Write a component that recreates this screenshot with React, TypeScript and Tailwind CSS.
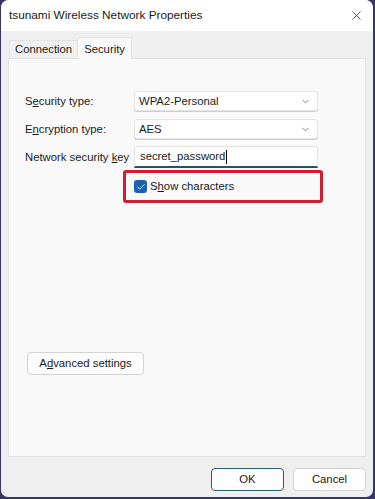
import { Check, ChevronDown, X } from "lucide-react";

const font = { fontFamily: '"Liberation Sans", Arial, sans-serif' };

function Combo({ value }: { value: string }) {
  return (
    <div className="flex h-[20px] w-[184px] items-center justify-between rounded-[3px] border border-[#e3e3e3] bg-white pl-[4px] pr-[6px] shadow-[0_1px_0_#cfcfcf]">
      <span>{value}</span>
      <ChevronDown size={11} strokeWidth={1.5} className="text-[#555]" />
    </div>
  );
}

export default function App() {
  return (
    <div className="h-[499px] w-[375px] overflow-hidden bg-[#3a3468] pb-[2px] pl-[1px] pr-[2px]" style={font}>
      <div className="flex h-full flex-col rounded-b-[7px] rounded-t-[8px] bg-[#efefef] text-[11.3px] text-[#1a1a1a]">
        <div className="flex h-[31px] items-center justify-between rounded-t-[8px] bg-white pl-[8px] pr-[9px]">
          <span className="text-[11.8px]">tsunami Wireless Network Properties</span>
          <X size={15} strokeWidth={1.2} className="text-[#222]" />
        </div>

        <div className="flex flex-1 flex-col px-[7px]">
          <div className="ml-px mt-[6px] flex h-[21px] items-end">
            <div className="flex h-[18px] items-center border border-b-0 border-r-0 border-[#e2e2e2] bg-[#f0f0f0] px-[5px]">
              Connection
            </div>
            <div className="relative z-10 -mb-px flex h-[22px] items-start border border-b-0 border-[#e2e2e2] bg-[#f9f9f9] px-[6px] pt-[3px]">
              Security
            </div>
          </div>

          <div className="flex h-[399px] flex-col border border-[#e2e2e2] bg-[#f9f9f9] pl-[16px]">
            <div className="mt-[32px] flex items-center">
              <span className="w-[109px] whitespace-nowrap">
                S<u>e</u>curity type:
              </span>
              <Combo value="WPA2-Personal" />
            </div>
            <div className="mt-[8px] flex items-center">
              <span className="w-[109px] whitespace-nowrap">
                E<u>n</u>cryption type:
              </span>
              <Combo value="AES" />
            </div>
            <div className="mt-[7px] flex items-center">
              <span className="w-[109px] whitespace-nowrap">
                Network security <u>k</u>ey
              </span>
              <div className="flex h-[22px] w-[184px] items-center rounded-t-[3px] border border-b-2 border-[#e3e3e3] border-b-[#1e5662] bg-white pl-[5px]">
                secret_password<span className="ml-px h-[14px] w-px bg-black" />
              </div>
            </div>
            <div className="ml-[98px] mt-[2px] flex h-[33px] w-[200px] items-center rounded-[3px] border-[3px] border-[#cf1f31] pl-[8px]">
              <span className="mr-[3px] flex h-[13px] w-[13px] items-center justify-center rounded-[3px] bg-[#1963b0]">
                <Check size={10} strokeWidth={2} className="text-white" />
              </span>
              <span>
                S<u>h</u>ow characters
              </span>
            </div>

            <div className="ml-[2px] mt-[149px] flex h-[23px] w-[117px] items-center justify-center rounded-[4px] border border-[#d4d4d4] bg-[#fdfdfd]">
              A<u>d</u>vanced settings
            </div>
          </div>

          <div className="mt-[11px] flex justify-end gap-[9px]">
            <div className="flex h-[23px] w-[73px] items-center justify-center rounded-[4px] border border-[#2b5f6b] bg-[#fdfdfd]">
              OK
            </div>
            <div className="flex h-[23px] w-[73px] items-center justify-center rounded-[4px] border border-[#d4d4d4] bg-[#fdfdfd]">
              Cancel
            </div>
          </div>
        </div>
      </div>
    </div>
  );
}
